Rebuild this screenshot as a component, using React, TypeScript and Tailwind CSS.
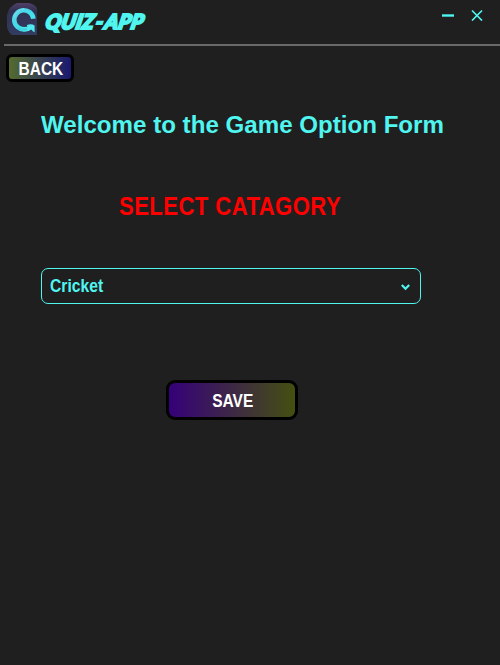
function Logo() {
  return (
    <svg className="mt-[3px] ml-[7px] h-8 w-[30px] shrink-0" viewBox="0 0 30 32">
      <defs>
        <linearGradient id="tile" x1="0" y1="0" x2="0" y2="1">
          <stop offset="0" stopColor="#533f69" />
          <stop offset="0.25" stopColor="#303252" />
          <stop offset="1" stopColor="#333b61" />
        </linearGradient>
        <linearGradient id="ring" x1="0" y1="0" x2="1" y2="1">
          <stop offset="0" stopColor="#58d5e8" />
          <stop offset="0.5" stopColor="#42dcea" />
          <stop offset="1" stopColor="#52f0ee" />
        </linearGradient>
      </defs>
      <path d="M10 0H22Q27 1 30 5V32H5Q1 29 0 24V12Q2 3 10 0Z" fill="url(#tile)" />
      <path d="M26.4 15.8A9.6 9.6 0 1 0 17.5 26.4Q21 26.2 23.5 24.2" fill="none" stroke="url(#ring)" strokeWidth="4.6" />
      <path d="M20 22Q24.5 20.5 27.6 22.5V29.2Q25.5 28.5 24.5 26.5L21 27.5Z" fill="#4feaf0" />
      <path d="M7 15Q8.5 7 17 6" fill="none" stroke="#9ce4ef" strokeWidth="1" opacity=".55" />
      <path d="M11 25Q15 28 20 26" fill="none" stroke="#2da8cc" strokeWidth="2" opacity=".35" />
    </svg>
  );
}

export default function App() {
  return (
    <main className="flex h-[665px] w-[500px] flex-col overflow-hidden bg-[#1f1f1f] font-['Liberation_Sans',Arial,sans-serif] font-bold text-[#50f5f0]">
      <header className="ml-1 flex h-[46px] shrink-0 items-start border-b-2 border-[#696969]">
        <div className="-ml-1 flex">
          <Logo />
          <h1 className="mt-[8px] ml-[9px] w-[110px] origin-left whitespace-nowrap font-['Lato',sans-serif] text-[20.5px] leading-[27px] font-black italic [-webkit-text-stroke:2.1px_#50f5f0]">
            <span className="inline-block -skew-x-12 tracking-[0.4px]">
              QUIZ<span className="mx-[1.5px]">-</span>APP
            </span>
          </h1>
        </div>
        <div className="mt-[9px] mr-[17px] ml-auto flex gap-[17px]">
          <button aria-label="Minimize" className="h-3 w-3">
            <svg viewBox="0 0 12 12" className="size-3"><path d="M0 6.5H12" stroke="currentColor" strokeWidth="2.4" /></svg>
          </button>
          <button aria-label="Close" className="h-3 w-3">
            <svg viewBox="0 0 12 12" className="size-3"><path d="M1 1.5L11 11.5M11 1.5L1 11.5" stroke="currentColor" strokeWidth="1.7" /></svg>
          </button>
        </div>
      </header>

      <button className="mt-2 ml-[6px] flex h-7 w-[68px] shrink-0 items-center justify-center rounded-md border-3 border-black bg-linear-to-r/srgb from-[#556b2f] to-[#191970] text-white">
        <span className="scale-x-[0.86] pt-px pl-px text-[18px] leading-5">BACK</span>
      </button>

      <h2 className="mt-[28px] ml-[41px] h-[30px] w-fit shrink-0 origin-left scale-x-[1.005] whitespace-nowrap text-[24px] leading-[30px]">
        Welcome to the Game Option Form
      </h2>

      <h3 className="mt-[50px] ml-[119px] h-8 w-fit shrink-0 origin-left scale-x-[0.85] whitespace-nowrap text-[26px] leading-8 tracking-[0.5px] text-[#ff0000]">
        SELECT CATAGORY
      </h3>

      <button className="mt-[46px] ml-[41px] flex h-9 w-[380px] shrink-0 items-center justify-between rounded-[7px] border border-[#50f5f0] pr-[10px] pl-2">
        <span className="origin-left scale-x-[0.87] text-[18px] leading-6">Cricket</span>
        <svg viewBox="0 0 9 7" className="mt-[2px] h-[7px] w-[9px]">
          <path d="M.8 1L4.5 4.7L8.2 1" fill="none" stroke="currentColor" strokeWidth="2.2" />
        </svg>
      </button>

      <button className="mt-[76px] ml-[166px] flex h-10 w-[132px] shrink-0 items-center justify-center rounded-[9px] border-3 border-black bg-linear-to-r/srgb from-[#36007a] to-[#445010] text-white">
        <span className="scale-x-[0.86] pt-[2px] pl-px text-[18px] leading-6">SAVE</span>
      </button>
    </main>
  );
}
